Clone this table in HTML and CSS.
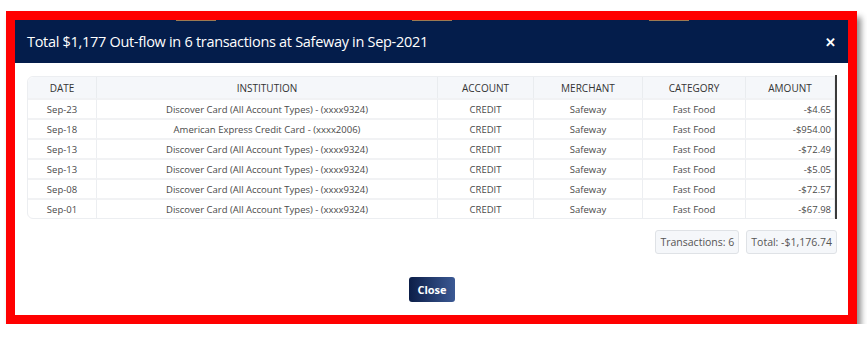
FILE: index.html
```html
<!DOCTYPE html>
<html>
<head>
<meta charset="utf-8">
<link rel="stylesheet" href="styles.css">
</head>
<body>
<div class="frame">
  <div class="modal">
    <div class="modal-header">
      <span class="tick t1"></span><span class="tick t2"></span><span class="tick t3"></span>
      <h1 class="title">Total $1,177 Out-flow in 6 transactions at Safeway in Sep-2021</h1>
      <span class="close-x">&#x2715;</span>
    </div>
    <div class="modal-body">
      <div class="table-wrap">
        <table class="tx">
          <colgroup>
            <col class="c-date"><col class="c-inst"><col class="c-acct"><col class="c-merch"><col class="c-cat"><col class="c-amt">
          </colgroup>
          <thead>
            <tr><th>DATE</th><th>INSTITUTION</th><th>ACCOUNT</th><th>MERCHANT</th><th>CATEGORY</th><th>AMOUNT</th></tr>
          </thead>
          <tbody>
            <tr><td>Sep-23</td><td>Discover Card (All Account Types) - (xxxx9324)</td><td>CREDIT</td><td>Safeway</td><td>Fast Food</td><td class="amt">-$4.65</td></tr>
            <tr><td>Sep-18</td><td>American Express Credit Card - (xxxx2006)</td><td>CREDIT</td><td>Safeway</td><td>Fast Food</td><td class="amt">-$954.00</td></tr>
            <tr><td>Sep-13</td><td>Discover Card (All Account Types) - (xxxx9324)</td><td>CREDIT</td><td>Safeway</td><td>Fast Food</td><td class="amt">-$72.49</td></tr>
            <tr><td>Sep-13</td><td>Discover Card (All Account Types) - (xxxx9324)</td><td>CREDIT</td><td>Safeway</td><td>Fast Food</td><td class="amt">-$5.05</td></tr>
            <tr><td>Sep-08</td><td>Discover Card (All Account Types) - (xxxx9324)</td><td>CREDIT</td><td>Safeway</td><td>Fast Food</td><td class="amt">-$72.57</td></tr>
            <tr><td>Sep-01</td><td>Discover Card (All Account Types) - (xxxx9324)</td><td>CREDIT</td><td>Safeway</td><td>Fast Food</td><td class="amt">-$67.98</td></tr>
          </tbody>
        </table>
        <div class="scrollbar"></div>
      </div>
      <div class="summary">
        <span class="badge">Transactions: 6</span>
        <span class="badge">Total: -$1,176.74</span>
      </div>
      <div class="actions">
        <button class="btn-close">Close</button>
      </div>
    </div>
  </div>
</div>
</body>
</html>
```
FILE: styles.css
```css
html, body {
  margin: 0;
  padding: 0;
  background: #ffffff;
  font-family: "Open Sans", "Noto Sans", sans-serif;
}
body {
  padding: 11px 0 0 6px;
}
.frame {
  width: 833px;
  height: 295px;
  border: 9px solid #ff0000;
  box-shadow: 4px 6px 6px rgba(0, 0, 0, 0.45);
  background: #ffffff;
}
.modal {
  display: flex;
  flex-direction: column;
  height: 100%;
}
.modal-header {
  position: relative;
  height: 43px;
  background: #041d4b;
  display: flex;
  align-items: center;
  justify-content: space-between;
  padding: 0 12px 0 12px;
}
.tick {
  position: absolute;
  top: 0;
  height: 1px;
  width: 40px;
  background: #9c7a52;
}
.t1 { left: 161px; }
.t2 { left: 397px; }
.t3 { left: 634px; }
.title {
  margin: 0;
  font-size: 14.5px;
  font-weight: 400;
  color: #ffffff;
  letter-spacing: -0.3px;
}
.close-x {
  color: #ffffff;
  font-size: 13px;
  font-weight: 700;
  margin-top: 1px;
}
.modal-body {
  padding: 13px 11px 12px 12px;
  display: flex;
  flex-direction: column;
}
.table-wrap {
  display: flex;
  width: 810px;
}
.tx {
  width: 807px;
  border-collapse: separate;
  border-spacing: 0;
  table-layout: fixed;
  border: 1px solid #eceef1;
  border-radius: 6px 0 0 6px;
  font-size: 9.5px;
  font-weight: 500;
  color: #4a4a4a;
}
.c-date { width: 68px; }
.c-inst { width: 341px; }
.c-acct { width: 96px; }
.c-merch { width: 109px; }
.c-cat { width: 103px; }
.c-amt { width: 89px; }
.tx th {
  background: #f5f7fa;
  height: 21px;
  padding: 0;
  font-size: 10px;
  font-weight: 500;
  color: #333333;
  border-left: 1px solid #e9ecef;
  text-align: center;
}
.tx th:first-child { border-left: none; border-top-left-radius: 6px; }
.tx td {
  height: 18px;
  padding: 0;
  text-align: center;
  border-left: 1px solid #eceef1;
  border-top: 2px solid #f1f2f4;
}
.tx td:first-child { border-left: none; }
.tx td.amt {
  text-align: right;
  padding-right: 3px;
}
.scrollbar {
  width: 3px;
  margin-top: -1px;
  background: #3a3a3a;
}
.summary {
  display: flex;
  justify-content: flex-end;
  gap: 7px;
  margin-top: 11px;
}
.badge {
  display: inline-flex;
  align-items: center;
  height: 22px;
  padding: 0 4px;
  background: #f5f7fa;
  border: 1px solid #dfe2e6;
  border-radius: 3px;
  font-size: 10.5px;
  color: #555555;
}
.actions {
  display: flex;
  justify-content: center;
  margin-top: 23px;
}
.btn-close {
  width: 46px;
  height: 25px;
  border: none;
  border-radius: 3px;
  background: linear-gradient(90deg, #0c1e48 0%, #3b5994 100%);
  color: #ffffff;
  font-family: "Open Sans", "Noto Sans", sans-serif;
  font-size: 11px;
  font-weight: 700;
  padding: 0;
}
```
